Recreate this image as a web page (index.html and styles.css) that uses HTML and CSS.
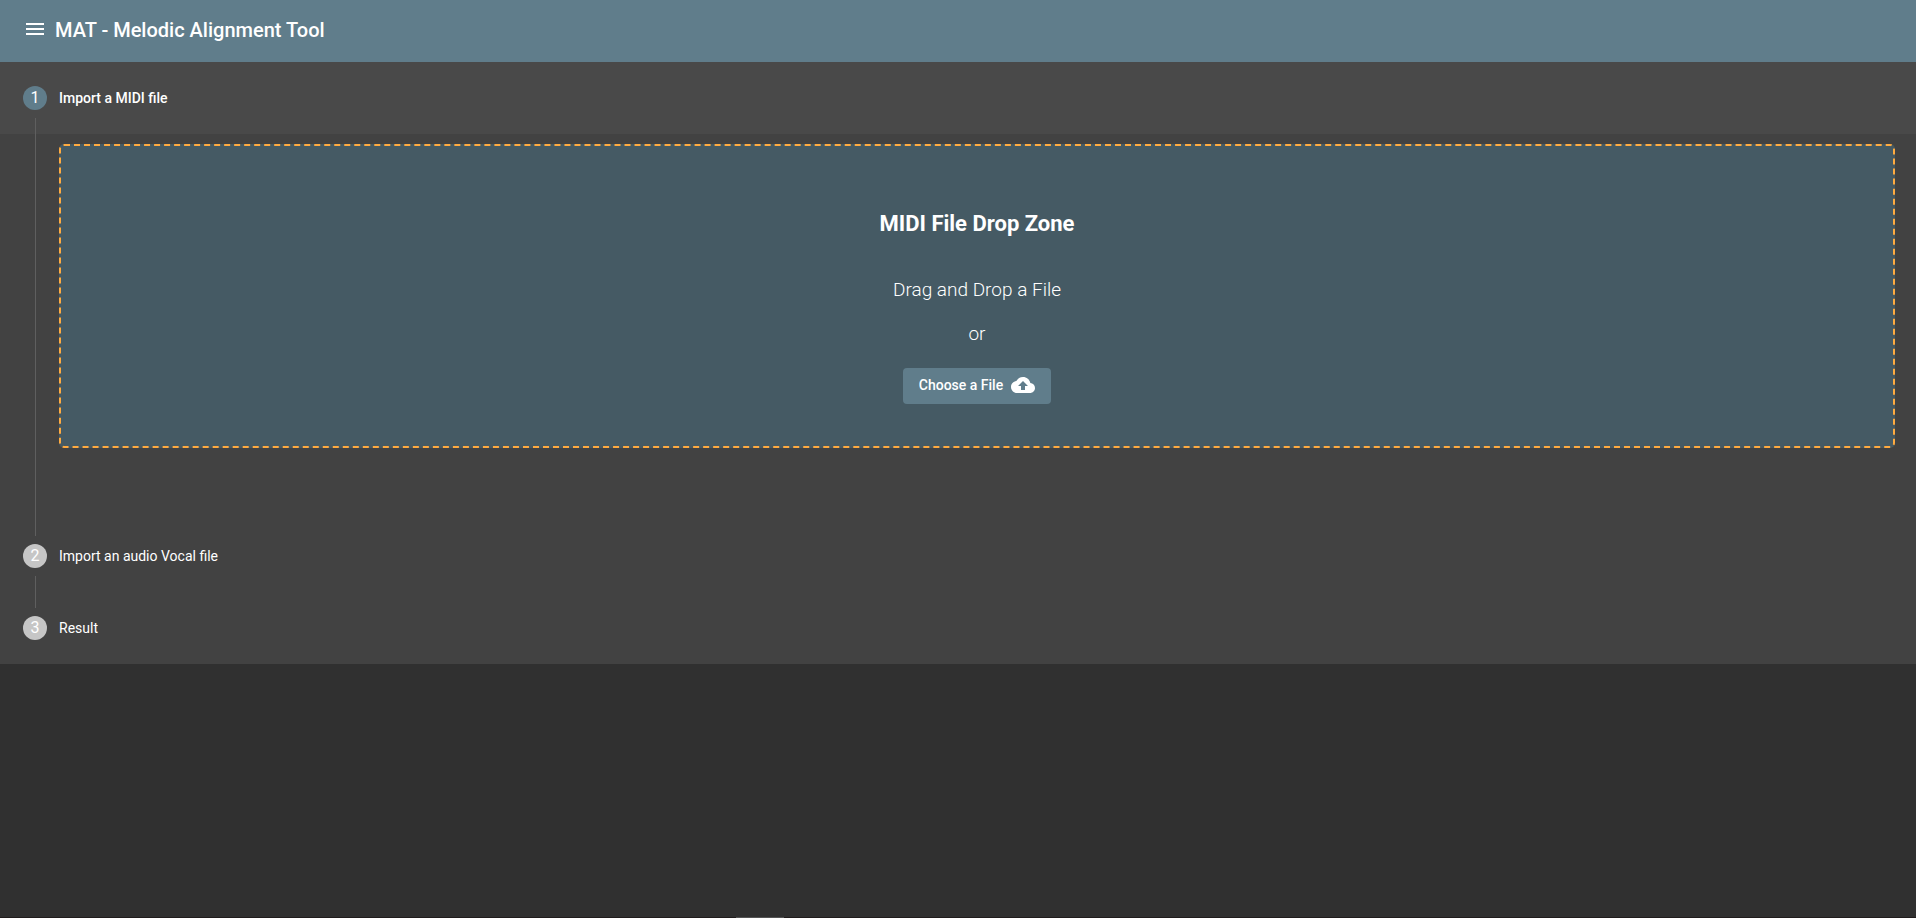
FILE: index.html
```
<!DOCTYPE html>
<html lang="en">
<head>
    <meta charset="UTF-8">
    <meta name="viewport" content="width=device-width, initial-scale=1.0">
    <title>MAT - Melodic Alignment Tool</title>
    <link rel="stylesheet" href="styles.css">
</head>
<body>
    <header class="toolbar">
        <button class="menu-button" type="button" aria-label="Menu">
            <svg viewBox="0 0 24 24" width="24" height="24"><path d="M3 18h18v-2H3v2zm0-5h18v-2H3v2zm0-7v2h18V6H3z"/></svg>
        </button>
        <h1>MAT - Melodic Alignment Tool</h1>
    </header>
    <main class="stepper">
        <section class="step">
            <button class="step-header active" type="button">
                <span class="step-icon">1</span>
                <span class="step-label">Import a MIDI file</span>
            </button>
            <div class="step-content">
                <div class="drop-zone">
                    <h2>MIDI File Drop Zone</h2>
                    <p>Drag and Drop a File</p>
                    <p>or</p>
                    <button class="choose-button" type="button">
                        Choose a File
                        <svg viewBox="0 0 24 24" width="24" height="24"><path d="M19.35 10.04C18.67 6.59 15.64 4 12 4 9.11 4 6.6 5.64 5.35 8.04 2.34 8.36 0 10.91 0 14c0 3.31 2.69 6 6 6h13c2.76 0 5-2.24 5-5 0-2.64-2.05-4.78-4.65-4.96zM14 13v4h-4v-4H7l5-5 5 5h-3z"/></svg>
                    </button>
                </div>
            </div>
        </section>
        <section class="step">
            <button class="step-header" type="button">
                <span class="step-icon">2</span>
                <span class="step-label">Import an audio Vocal file</span>
            </button>
            <div class="step-content collapsed"></div>
        </section>
        <section class="step">
            <button class="step-header" type="button">
                <span class="step-icon">3</span>
                <span class="step-label">Result</span>
            </button>
        </section>
    </main>
    <footer class="bottom-bar"><span></span></footer>
</body>
</html>
```
FILE: styles.css
```
* {
    box-sizing: border-box;
}
body {
    font-family: Roboto, "Liberation Sans", sans-serif;
    margin: 0;
    min-height: 100vh;
    display: flex;
    flex-direction: column;
    background-color: #303030;
    color: #fff;
}
button {
    font-family: inherit;
    color: inherit;
    border: none;
    cursor: pointer;
}
svg {
    display: block;
    fill: currentColor;
}
.toolbar {
    display: flex;
    align-items: center;
    gap: 8px;
    height: 62px;
    padding: 0 23px 2px;
    background-color: #607d8b;
}
.toolbar h1 {
    margin: 0;
    font-size: 20px;
    font-weight: 500;
    line-height: 32px;
}
.menu-button {
    padding: 0 0 2px;
    background: none;
}
.stepper {
    background-color: #424242;
}
.step-header {
    display: flex;
    align-items: center;
    gap: 12px;
    width: 100%;
    height: 72px;
    padding: 0 23px;
    background: none;
    font-size: 14px;
    text-align: left;
}
.step-header.active {
    background-color: #494949;
    font-weight: 500;
}
.step-icon {
    width: 24px;
    height: 24px;
    border-radius: 50%;
    background-color: #c6c6c6;
    font-size: 16px;
    font-weight: 400;
    line-height: 24px;
    text-align: center;
}
.active .step-icon {
    background-color: #607d8b;
}
.step-content {
    position: relative;
    margin-left: 35px;
    padding: 10px 21px 72px 24px;
}
.step-content.collapsed {
    padding: 0;
}
/* connector between two step circles */
.step-content::before {
    content: "";
    position: absolute;
    top: -16px;
    bottom: -16px;
    left: 0;
    border-left: 1px solid #5f5f5f;
}
.drop-zone {
    display: flex;
    flex-direction: column;
    align-items: center;
    padding: 62px 24px 42px;
    background-color: #455a64;
    border: 2px dashed #ffab40;
    border-radius: 5px;
}
.drop-zone h2 {
    margin: 0 0 38px;
    font-size: 22px;
    font-weight: 700;
    line-height: 32px;
}
.drop-zone p {
    margin: 0 0 20px;
    font-size: 19px;
    font-weight: 300;
    line-height: 24px;
}
.choose-button {
    display: flex;
    align-items: center;
    gap: 8px;
    height: 36px;
    margin-top: 2px;
    padding: 0 16px 2px;
    border-radius: 4px;
    background-color: #607d8b;
    font-size: 14px;
    font-weight: 500;
}
.bottom-bar {
    display: flex;
    height: 1px;
    margin-top: auto;
    padding-left: 38.4%;
    background-color: #201c1c;
}
.bottom-bar span {
    width: 48px;
    background-color: #555;
}
```
